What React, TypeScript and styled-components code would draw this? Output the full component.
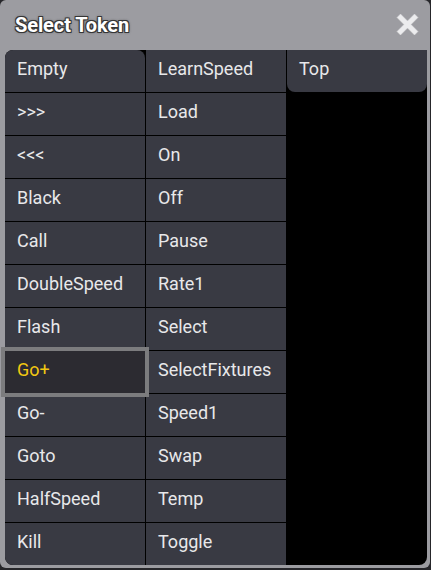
import React from "react";
import styled, { createGlobalStyle } from "styled-components";

const GlobalStyle = createGlobalStyle`
  html, body {
    margin: 0;
    padding: 0;
    background: #26262a;
  }
  body {
    font-family: Roboto, "Liberation Sans", sans-serif;
  }
`;

const Window = styled.div`
  width: 430px;
  height: 568px;
  box-sizing: border-box;
  background: #9c9ca1;
  border-radius: 6px;
  padding: 0 3px 3px 5px;
  display: flex;
  flex-direction: column;
`;

const TitleBar = styled.div`
  height: 50px;
  display: flex;
  align-items: center;
  justify-content: space-between;
  padding: 0 8px 1px 10px;
  box-sizing: border-box;
`;

const Title = styled.h1`
  margin: 0;
  font-size: 20px;
  font-weight: 700;
  color: #ffffff;
  letter-spacing: -0.1px;
  text-shadow:
    -1px -1px 0 #353535,
    1px -1px 0 #353535,
    -1px 1px 0 #353535,
    1px 1px 0 #353535,
    0 0 3px #2a2a2a;
`;

const CloseButton = styled.button`
  width: 24px;
  height: 24px;
  padding: 0;
  border: none;
  background: none;
  display: flex;
  align-items: center;
  justify-content: center;
  cursor: pointer;
`;

const Grid = styled.div`
  display: grid;
  grid-template-columns: repeat(3, 140px);
  gap: 1px;
  background: #000;
  border-radius: 8px 0 8px 8px;
  align-items: start;
`;

const Column = styled.div`
  display: flex;
  flex-direction: column;
  gap: 1px;
`;

const Cell = styled.div<{ $selected?: boolean; $radius?: string }>`
  position: relative;
  height: 42px;
  box-sizing: border-box;
  padding: 0 12px 5px 12px;
  display: flex;
  align-items: center;
  font-size: 18px;
  color: ${(p) => (p.$selected ? "#f2c811" : "#e8e8ea")};
  background: ${(p) => (p.$selected ? "#2c2b31" : "#393a43")};
  border-radius: ${(p) => p.$radius || "0"};
  white-space: nowrap;
  ${(p) =>
    p.$selected &&
    `
    z-index: 1;
    outline: 4px solid #7c7c7e;
  `}
`;

const col1 = [
  "Empty",
  ">>>",
  "<<<",
  "Black",
  "Call",
  "DoubleSpeed",
  "Flash",
  "Go+",
  "Go-",
  "Goto",
  "HalfSpeed",
  "Kill",
];

const col2 = [
  "LearnSpeed",
  "Load",
  "On",
  "Off",
  "Pause",
  "Rate1",
  "Select",
  "SelectFixtures",
  "Speed1",
  "Swap",
  "Temp",
  "Toggle",
];

const CloseIcon = () => (
  <svg width="23" height="23" viewBox="0 0 23 23">
    <path
      d="M4.5 1 L11.5 8 L18.5 1 L22 4.5 L15 11.5 L22 18.5 L18.5 22 L11.5 15 L4.5 22 L1 18.5 L8 11.5 L1 4.5 Z"
      fill="#ececee"
      stroke="#d8d8da"
      strokeWidth="0.5"
    />
  </svg>
);

export default function App() {
  const selected = "Go+";
  return (
    <>
      <GlobalStyle />
      <Window>
        <TitleBar>
          <Title>Select Token</Title>
          <CloseButton aria-label="Close">
            <CloseIcon />
          </CloseButton>
        </TitleBar>
        <Grid>
          <Column>
            {col1.map((t, i) => (
              <Cell
                key={t}
                $selected={t === selected}
                $radius={
                  i === 0 ? "8px 8px 0 0" : i === col1.length - 1 ? "0 0 0 8px" : undefined
                }
              >
                {t}
              </Cell>
            ))}
          </Column>
          <Column>
            {col2.map((t) => (
              <Cell key={t}>{t}</Cell>
            ))}
          </Column>
          <Column>
            <Cell $radius="0 0 8px 8px">Top</Cell>
          </Column>
        </Grid>
      </Window>
    </>
  );
}
